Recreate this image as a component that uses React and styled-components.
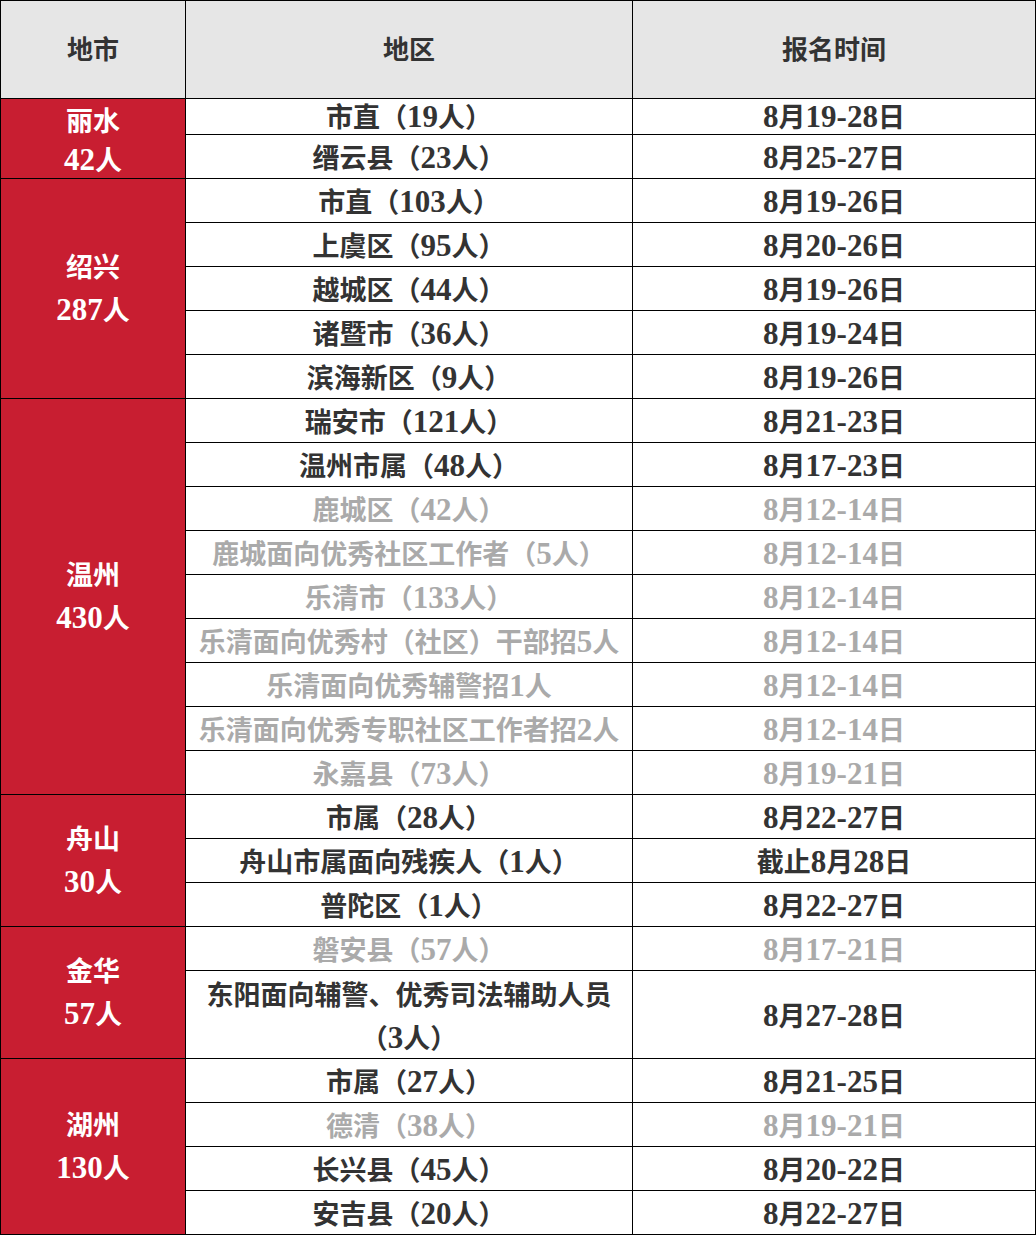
import React from 'react'
import styled, { createGlobalStyle } from 'styled-components'

const GlobalStyle = createGlobalStyle`
  html, body {
    margin: 0;
    padding: 0;
    background: #fff;
  }
`

const groups = [
  {
    city: '丽水',
    total: '42人',
    compact: true,
    rows: [
      { area: '市直（19人）', date: '8月19-28日', short: true },
      { area: '缙云县（23人）', date: '8月25-27日' },
    ],
  },
  {
    city: '绍兴',
    total: '287人',
    rows: [
      { area: '市直（103人）', date: '8月19-26日' },
      { area: '上虞区（95人）', date: '8月20-26日' },
      { area: '越城区（44人）', date: '8月19-26日' },
      { area: '诸暨市（36人）', date: '8月19-24日' },
      { area: '滨海新区（9人）', date: '8月19-26日' },
    ],
  },
  {
    city: '温州',
    total: '430人',
    rows: [
      { area: '瑞安市（121人）', date: '8月21-23日' },
      { area: '温州市属（48人）', date: '8月17-23日' },
      { area: '鹿城区（42人）', date: '8月12-14日', dim: true },
      { area: '鹿城面向优秀社区工作者（5人）', date: '8月12-14日', dim: true },
      { area: '乐清市（133人）', date: '8月12-14日', dim: true },
      { area: '乐清面向优秀村（社区）干部招5人', date: '8月12-14日', dim: true },
      { area: '乐清面向优秀辅警招1人', date: '8月12-14日', dim: true },
      { area: '乐清面向优秀专职社区工作者招2人', date: '8月12-14日', dim: true },
      { area: '永嘉县（73人）', date: '8月19-21日', dim: true },
    ],
  },
  {
    city: '舟山',
    total: '30人',
    rows: [
      { area: '市属（28人）', date: '8月22-27日' },
      { area: '舟山市属面向残疾人（1人）', date: '截止8月28日' },
      { area: '普陀区（1人）', date: '8月22-27日' },
    ],
  },
  {
    city: '金华',
    total: '57人',
    rows: [
      { area: '磐安县（57人）', date: '8月17-21日', dim: true },
      { area: '东阳面向辅警、优秀司法辅助人员\n（3人）', date: '8月27-28日', tall: true },
    ],
  },
  {
    city: '湖州',
    total: '130人',
    rows: [
      { area: '市属（27人）', date: '8月21-25日' },
      { area: '德清（38人）', date: '8月19-21日', dim: true },
      { area: '长兴县（45人）', date: '8月20-22日' },
      { area: '安吉县（20人）', date: '8月22-27日' },
    ],
  },
]

const Table = styled.table`
  width: 1035px;
  table-layout: fixed;
  border-collapse: collapse;
  font-family: "Noto Sans CJK SC", sans-serif;
  font-weight: 700;
  font-size: 27px;
  color: #333;
`

const HeadCell = styled.th`
  height: 93px;
  background: #e6e6e6;
  border: 1px solid #000;
  font-size: 26px;
  font-weight: 700;
  line-height: 30px;
  text-align: center;
  vertical-align: middle;
  padding: 0 0 4px;
`

const CityCell = styled.td`
  background: #c81e31;
  color: #fff;
  border: 1px solid #000;
  text-align: center;
  vertical-align: middle;
  line-height: ${p => (p.$compact ? 39 : 43)}px;
  padding: ${p => (p.$compact ? '0' : '0 0 4px')};
`

const Cell = styled.td`
  height: ${p => (p.$tall ? 87 : p.$short ? 35 : 43)}px;
  border: 1px solid #000;
  text-align: center;
  vertical-align: middle;
  line-height: ${p => (p.$short ? 30 : 43)}px;
  padding: 0;
  color: ${p => (p.$dim ? '#aaa' : '#333')};
  white-space: pre;
`

const Latin = styled.span`
  font-family: "Liberation Serif", serif;
  font-size: 31px;
  line-height: 1;
`

// wrap runs of digits / dashes so they get the serif face
function Txt({ children }) {
  const parts = children.split(/([0-9-]+)/)
  return parts.map((s, i) =>
    /^[0-9-]+$/.test(s) ? <Latin key={i}>{s}</Latin> : <React.Fragment key={i}>{s}</React.Fragment>
  )
}

export default function App() {
  return (
    <>
      <GlobalStyle />
      <Table>
        <colgroup>
          <col style={{ width: 185 }} />
          <col style={{ width: 447 }} />
          <col style={{ width: 403 }} />
        </colgroup>
        <thead>
          <tr>
            <HeadCell>地市</HeadCell>
            <HeadCell>地区</HeadCell>
            <HeadCell>报名时间</HeadCell>
          </tr>
        </thead>
        <tbody>
          {groups.map(g =>
            g.rows.map((r, i) => (
              <tr key={g.city + i}>
                {i === 0 && (
                  <CityCell rowSpan={g.rows.length} $compact={g.compact}>
                    {g.city}
                    <br />
                    <Txt>{g.total}</Txt>
                  </CityCell>
                )}
                <Cell $dim={r.dim} $tall={r.tall} $short={r.short}>
                  <Txt>{r.area}</Txt>
                </Cell>
                <Cell $dim={r.dim} $tall={r.tall} $short={r.short}>
                  <Txt>{r.date}</Txt>
                </Cell>
              </tr>
            ))
          )}
        </tbody>
      </Table>
    </>
  )
}
